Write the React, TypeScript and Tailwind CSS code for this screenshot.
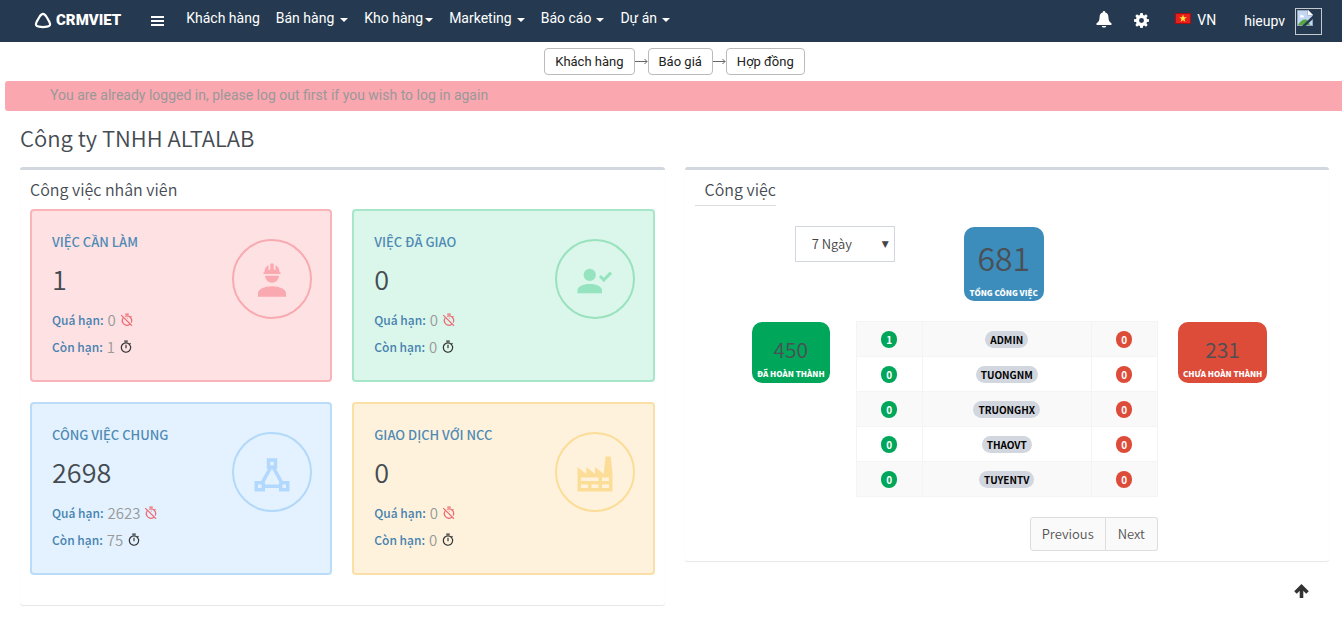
import type { ReactNode } from 'react'
import { MdOutlineTimer, MdOutlineTimerOff } from 'react-icons/md'

const NAV = [
  { label: 'Khách hàng', menu: false, gap: '' },
  { label: 'Bán hàng', menu: true, gap: 'gap-1.5' },
  { label: 'Kho hàng', menu: true, gap: 'gap-0.5' },
  { label: 'Marketing', menu: true, gap: 'gap-[5px]' },
  { label: 'Báo cáo', menu: true, gap: 'gap-[5px]' },
  { label: 'Dự án', menu: true, gap: 'gap-[5px]' },
]

const STEPS = ['Khách hàng', 'Báo giá', 'Hợp đồng']

const CARDS = [
  {
    title: 'VIỆC CẦN LÀM',
    total: 1,
    late: 0,
    left: 1,
    box: 'border-[#f8b4b9] bg-[#fde1e3]',
    ring: 'border-[#f7abb1] text-[#faa9b0]',
    icon: 'M12,15C7.58,15 4,16.79 4,19V21H20V19C20,16.79 16.42,15 12,15M8,9A4,4 0 0,0 12,13A4,4 0 0,0 16,9M11.5,2C11.2,2 11,2.21 11,2.5V5.5H10V3C10,3 7.75,3.86 7.75,6.75C7.75,6.75 7,6.89 7,8H17C16.95,6.89 16.25,6.75 16.25,6.75C16.25,3.86 14,3 14,3V5.5H13V2.5C13,2.21 12.81,2 12.5,2H11.5Z',
  },
  {
    title: 'VIỆC ĐÃ GIAO',
    total: 0,
    late: 0,
    left: 0,
    box: 'border-[#a8e6ca] bg-[#dbf6ea]',
    ring: 'border-[#98e2be] text-[#95e4bf]',
    icon: 'M9,5A3.5,3.5 0 0,1 12.5,8.5A3.5,3.5 0 0,1 9,12A3.5,3.5 0 0,1 5.5,8.5A3.5,3.5 0 0,1 9,5M9,13.75C12.87,13.75 16,15.32 16,17.25V19H2V17.25C2,15.32 5.13,13.75 9,13.75M17,12.66L14.25,9.66L15.41,8.5L17,10.09L20.59,6.5L21.75,7.91L17,12.66Z',
  },
  {
    title: 'CÔNG VIỆC CHUNG',
    total: 2698,
    late: 2623,
    left: 75,
    box: 'border-[#bbdcf8] bg-[#e3f2fe]',
    ring: 'border-[#b2d8fa] text-[#b2d9fd]',
    icon: 'M9,3V9H9.73L5.79,16H2V22H8V20H16V22H22V16H18.21L14.27,9H15V3M11,5H13V7H11M12,9.04L16,16.15V18H8V16.15M4,18H6V20H4M18,18H20V20H18',
  },
  {
    title: 'GIAO DỊCH VỚI NCC',
    total: 0,
    late: 0,
    left: 0,
    box: 'border-[#fae0a6] bg-[#fef2dc]',
    ring: 'border-[#fbdd98] text-[#fcdd98]',
    icon: 'M4,18V20H8V18H4M4,14V16H14V14H4M10,18V20H14V18H10M16,14V16H20V14H16M16,18V20H20V18H16M2,22V8L7,12V8L12,12V8L17,12L18,2H21L22,12V22H2Z',
  },
]

const STAFF = [
  { name: 'ADMIN', done: 1, open: 0 },
  { name: 'TUONGNM', done: 0, open: 0 },
  { name: 'TRUONGHX', done: 0, open: 0 },
  { name: 'THAOVT', done: 0, open: 0 },
  { name: 'TUYENTV', done: 0, open: 0 },
]

function Navbar() {
  return (
    <header className="flex h-[42px] items-center bg-[#253a50] pl-[34px] pr-5 font-['Roboto',sans-serif] text-sm text-white">
      <a href="#" className="flex items-center gap-1">
        <svg width="18" height="17" viewBox="0 0 18 17" fill="none" stroke="currentColor" strokeWidth="2.2" aria-hidden="true">
          <path d="M9 1.8C10.6 1.8 11.4 2.9 12.6 5L15.4 9.9C16.9 12.8 16 14.2 13 14.7C10.3 15.2 7.7 15.2 5 14.7C2 14.2 1.1 12.8 2.6 9.9L5.4 5C6.6 2.9 7.4 1.8 9 1.8Z" />
        </svg>
        <span className="text-[15px] font-black">CRMVIET</span>
      </a>
      <button type="button" aria-label="Menu" className="ml-[30px]">
        <svg width="14" height="12" viewBox="0 0 14 12" fill="currentColor" aria-hidden="true">
          <path d="M0 1h13v2H0zM0 5h13v2H0zM0 9h13v2H0z" />
        </svg>
      </button>
      <nav className="ml-[21px] flex gap-4 pb-1.5">
        {NAV.map((n) => (
          <a key={n.label} href="#" className={`flex items-center whitespace-nowrap ${n.gap}`}>
            {n.label}
            {n.menu && <span className="mt-1 border-x-4 border-t-4 border-x-transparent border-t-white" />}
          </a>
        ))}
      </nav>
      <div className="ml-auto flex items-center">
        <button type="button" aria-label="Notifications" className="pb-1">
          <svg width="16" height="17" viewBox="0 0 16 17" fill="currentColor" aria-hidden="true">
            <path d="M8 0C8.8 0 9.3 .6 9.3 1.4C11.3 2 12.3 3.5 12.4 5.8C12.5 9 13 10.8 15.3 12.3C16 12.9 15.8 14 14.8 14H1.2C.2 14 0 12.9 .7 12.3C3 10.8 3.5 9 3.6 5.8C3.7 3.5 4.7 2 6.7 1.4C6.7 .6 7.2 0 8 0ZM5.8 15H10.2C10 16 9.2 16.5 8 16.5S6 16 5.8 15Z" />
          </svg>
        </button>
        <button type="button" aria-label="Settings" className="ml-[22px] pb-0.5">
          <svg width="15" height="15" viewBox="0 0 14 14" fill="currentColor" fillRule="evenodd" aria-hidden="true">
            <path d="M5.9 0H8.1L8.5 1.9L9.6 2.35L11.2 1.25L12.75 2.8L11.65 4.4L12.1 5.5L14 5.9V8.1L12.1 8.5L11.65 9.6L12.75 11.2L11.2 12.75L9.6 11.65L8.5 12.1L8.1 14H5.9L5.5 12.1L4.4 11.65L2.8 12.75L1.25 11.2L2.35 9.6L1.9 8.5L0 8.1V5.9L1.9 5.5L2.35 4.4L1.25 2.8L2.8 1.25L4.4 2.35L5.5 1.9ZM7 4.7A2.3 2.3 0 1 0 7 9.3A2.3 2.3 0 1 0 7 4.7Z" />
          </svg>
        </button>
        <a href="#" className="ml-[26px] flex items-center gap-1.5 pb-0.5">
          <svg width="16" height="11" viewBox="0 0 16 11" className="mb-1" aria-hidden="true">
            <rect width="16" height="11" fill="#a80d10" />
            <rect x="1" y="1" width="14" height="9" fill="#e8201d" />
            <path d="M8 1.6L9 4.3H11.7L9.5 6L10.3 8.8L8 7.2L5.7 8.8L6.5 6L4.3 4.3H7Z" fill="#ffe83a" />
          </svg>
          VN
        </a>
        <a href="#" className="ml-7 flex items-center gap-2.5">
          hieupv
          <span className="flex h-[27px] w-[27px] border border-[#c3c9cf] p-px">
            <svg width="16" height="16" viewBox="0 0 16 16" aria-hidden="true">
              <path d="M0 0H11L16 5V16H0Z" fill="#9aa5b4" />
              <path d="M1 1H10.5V5.5H15V15H1Z" fill="#c3d6f3" />
              <path d="M11 0L16 5H11Z" fill="#fff" />
              <path d="M3 6.5C3 4.5 5.5 4.5 5.7 5.5C7.5 5.2 7.5 7.5 6 7.5H3.5Z" fill="#fff" />
              <path d="M1 15C3 11 6 9 9 9.5C11 10 12 12 13 15Z" fill="#57a845" />
              <path d="M16 5.5V9L8.5 16H5Z" fill="#253a50" />
            </svg>
          </span>
        </a>
      </div>
    </header>
  )
}

function Steps() {
  return (
    <div className="flex items-center justify-center pl-[7px] pt-1.5 font-['Roboto',sans-serif] text-[13px] text-[#222]">
      {STEPS.map((s, i) => (
        <div key={s} className="flex items-center">
          {i > 0 && (
            <svg width="13" height="7" viewBox="0 0 13 7" fill="none" stroke="#666" aria-hidden="true">
              <path d="M0 3.5H12M9.5 1L12 3.5L9.5 6" />
            </svg>
          )}
          <button type="button" className="h-[27px] whitespace-nowrap rounded border border-[#bbb] px-2.5">
            {s}
          </button>
        </div>
      ))}
    </div>
  )
}

function Panel({ children }: { children: ReactNode }) {
  return (
    <section className="rounded-[3px] border-t-[3px] border-[#d2d6de] bg-white p-2.5 shadow-[0_1px_1px_rgba(0,0,0,0.1)]">
      {children}
    </section>
  )
}

function WorkCard({ card }: { card: (typeof CARDS)[number] }) {
  return (
    <article className={`flex items-start justify-between rounded border-2 pb-5 pl-5 pr-[18px] pt-[17px] ${card.box}`}>
      <div>
        <h3 className="text-[13px] font-medium leading-[27px] text-[#4f8ab5]">{card.title}</h3>
        <p className="pb-1.5 pt-[3px] text-[27px] font-[350] leading-[42px] text-[#444b52]">{card.total}</p>
        <p className="flex items-center text-[12px] font-medium leading-[27px] text-[#4682b0]">
          Quá hạn:
          <span className="mx-1 text-[15px] font-[350] text-[#999]">{card.late}</span>
          <MdOutlineTimerOff className="size-3.5 text-[#ec6b74]" />
        </p>
        <p className="flex items-center text-[12px] font-medium leading-[27px] text-[#4682b0]">
          Còn hạn:
          <span className="mx-1 text-[15px] font-[350] text-[#999]">{card.left}</span>
          <MdOutlineTimer className="size-3.5 text-[#333]" />
        </p>
      </div>
      <div className={`mt-[11px] flex size-20 items-center justify-center rounded-full border-2 pt-1 ${card.ring}`}>
        <svg width="42" height="42" viewBox="0 0 24 24" fill="currentColor" aria-hidden="true">
          <path d={card.icon} />
        </svg>
      </div>
    </article>
  )
}

function Badge({ className, children }: { className: string; children: ReactNode }) {
  return (
    <span className={`inline-block h-[17px] rounded-[10px] align-middle text-[10px] font-bold leading-[17px] ${className}`}>
      {children}
    </span>
  )
}

function StaffTable() {
  return (
    <table aria-label="Công việc" className="w-full table-fixed border-collapse text-center text-[10px] leading-[17px]">
      <colgroup>
        <col className="w-[22%]" />
        <col />
        <col className="w-[22%]" />
      </colgroup>
      <tbody>
        {STAFF.map((s) => (
          <tr key={s.name} className="h-[35px] odd:bg-[#f9f9f9]">
            <td className="border border-[#f4f4f4]">
              <Badge className="w-4 bg-[#00a65a] text-white">{s.done}</Badge>
            </td>
            <td className="border border-[#f4f4f4]">
              <Badge className="bg-[#d2d6de] px-[5px] text-black">{s.name}</Badge>
            </td>
            <td className="border border-[#f4f4f4]">
              <Badge className="w-4 bg-[#dd4b39] text-white">{s.open}</Badge>
            </td>
          </tr>
        ))}
      </tbody>
    </table>
  )
}

function SmallStat({ value, label, color }: { value: number; label: string; color: string }) {
  return (
    <div className={`whitespace-nowrap rounded-[10px] px-[5px] pb-0.5 pt-2.5 text-center ${color}`}>
      <p className="text-[21px] font-[350] leading-[34px] text-[#4a5055]">{value}</p>
      <p className="text-[8px] font-black leading-[15px] text-white">{label}</p>
    </div>
  )
}

export default function App() {
  return (
    <div className="min-h-screen bg-white pb-4 font-['Noto_Sans_CJK_SC',sans-serif] text-[#444b52]">
      <Navbar />
      <Steps />
      <p role="alert" className="ml-[5px] mt-1.5 rounded-l-[3px] bg-[#faa7b0] pb-0.5 pl-[45px] font-['Roboto',sans-serif] text-sm leading-[28px] text-[#999]">
        You are already logged in, please log out first if you wish to log in again
      </p>
      <main className="pl-5 pr-[13px]">
        <h1 className="pb-1 text-[22px] font-[350] leading-[52px]">Công ty TNHH ALTALAB</h1>
        <div className="grid grid-cols-2 items-start gap-5">
          <Panel>
            <h2 className="-mt-1 mb-1.5 text-[16px] font-[350] leading-[27px]">Công việc nhân viên</h2>
            <div className="grid grid-cols-2 gap-5 pb-5">
              {CARDS.map((c) => (
                <WorkCard key={c.title} card={c} />
              ))}
            </div>
          </Panel>
          <Panel>
            <h2 className="-mt-1 w-fit border-b border-[#ddd] pb-0.5 pl-2.5 text-[16px] font-[350] leading-[27px]">Công việc</h2>
            <div className="mt-5 grid grid-cols-3 items-start">
              <div className="flex justify-end pr-2">
                <div className="relative">
                  <select aria-label="Khoảng thời gian" className="h-9 w-[100px] appearance-none border border-[#d2d6de] bg-white pl-4 text-[13px] font-[350] text-[#444]">
                    <option>7 Ngày</option>
                    <option>30 Ngày</option>
                  </select>
                  <span className="pointer-events-none absolute right-1.5 top-2.5 font-['DejaVu_Sans',sans-serif] text-[9px] leading-4 text-[#444]">▼</span>
                </div>
              </div>
              <div className="flex justify-center pr-1.5 pt-px">
                <div className="whitespace-nowrap rounded-[10px] bg-[#3c8dbc] px-1.5 pb-px pt-1.5 text-center">
                  <p className="text-[32px] font-[350] leading-[48px] text-[#4a5055]">681</p>
                  <p className="mt-1 text-[8px] font-black leading-[15px] text-white">TỔNG CÔNG VIỆC</p>
                </div>
              </div>
            </div>
            <div className="mt-5 grid grid-cols-[1fr_2fr_1fr] items-start">
              <div className="flex justify-end pr-[21px] pt-px">
                <SmallStat value={450} label="ĐÃ HOÀN THÀNH" color="bg-[#00a65a]" />
              </div>
              <div className="px-[5px]">
                <StaffTable />
                <div className="mt-5 flex justify-end text-[13px] font-[350] text-[#555]">
                  <button type="button" className="h-[34px] rounded-l-[3px] border border-[#ddd] bg-[#fafafa] px-[11px]">
                    Previous
                  </button>
                  <button type="button" className="h-[34px] rounded-r-[3px] border border-l-0 border-[#ddd] bg-[#fafafa] px-3">
                    Next
                  </button>
                </div>
              </div>
              <div className="flex pl-[15px] pt-px">
                <SmallStat value={231} label="CHƯA HOÀN THÀNH" color="bg-[#dd4b39]" />
              </div>
            </div>
          </Panel>
        </div>
      </main>
      <a href="#" aria-label="Lên đầu trang" className="fixed bottom-[23px] right-[33px] text-[#333]">
        <svg width="15" height="15" viewBox="0 0 15 15" fill="none" stroke="currentColor" strokeWidth="3.6" aria-hidden="true">
          <path d="M7.5 14V2.8M1.5 8.6L7.5 2.6L13.5 8.6" />
        </svg>
      </a>
    </div>
  )
}
